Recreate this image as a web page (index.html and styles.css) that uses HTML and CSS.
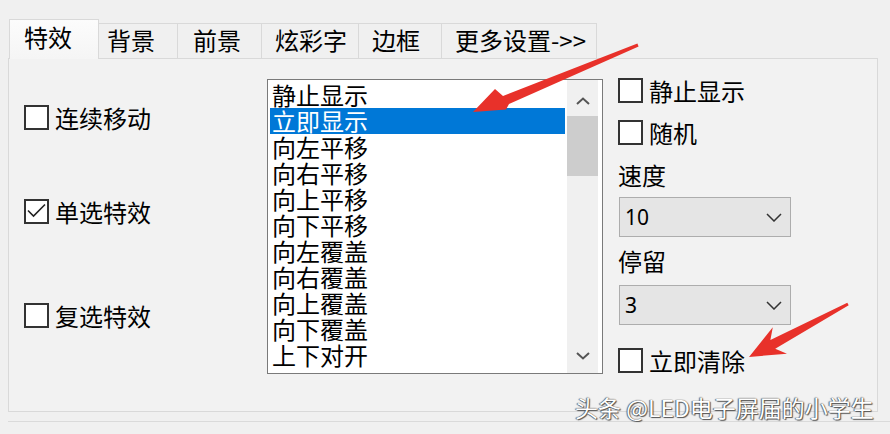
FILE: index.html
```html
<!DOCTYPE html>
<html lang="zh-CN">
<head>
<meta charset="utf-8">
<title>特效</title>
<link rel="stylesheet" href="styles.css">
</head>
<body>
<div class="window">
  <div class="tabs">
    <div class="tab active t1">特效</div>
    <div class="tab t2">背景</div>
    <div class="tab t3">前景</div>
    <div class="tab t4">炫彩字</div>
    <div class="tab t5">边框</div>
    <div class="tab t6">更多设置-&gt;&gt;</div>
  </div>
  <div class="panel">
    <div class="col-left">
      <div class="check"><span class="box"></span><span>连续移动</span></div>
      <div class="check c2"><span class="box"><svg width="21" height="21" viewBox="0 0 21 21"><polyline points="2,9.5 7.5,15 19,3.5" fill="none" stroke="#222" stroke-width="1.6"/></svg></span><span>单选特效</span></div>
      <div class="check c3"><span class="box"></span><span>复选特效</span></div>
    </div>
    <div class="listbox">
      <ul class="items">
        <li>静止显示</li>
        <li class="sel">立即显示</li>
        <li>向左平移</li>
        <li>向右平移</li>
        <li>向上平移</li>
        <li>向下平移</li>
        <li>向左覆盖</li>
        <li>向右覆盖</li>
        <li>向上覆盖</li>
        <li>向下覆盖</li>
        <li>上下对开</li>
      </ul>
      <div class="scrollbar">
        <div class="sb-btn up"><svg width="14" height="8" viewBox="0 0 14 8"><polyline points="1,7 7,1.5 13,7" fill="none" stroke="#555" stroke-width="2"/></svg></div>
        <div class="thumb"></div>
        <div class="sb-space"></div>
        <div class="sb-btn down"><svg width="14" height="8" viewBox="0 0 14 8"><polyline points="1,1 7,6.5 13,1" fill="none" stroke="#555" stroke-width="2"/></svg></div>
      </div>
    </div>
    <div class="col-right">
      <div class="check"><span class="box"></span><span>静止显示</span></div>
      <div class="check r2"><span class="box"></span><span>随机</span></div>
      <div class="lbl">速度</div>
      <div class="combo"><span>10</span><svg width="16" height="9" viewBox="0 0 16 9"><polyline points="1,1 8,8 15,1" fill="none" stroke="#333" stroke-width="1.5"/></svg></div>
      <div class="lbl lbl2">停留</div>
      <div class="combo combo2"><span>3</span><svg width="16" height="9" viewBox="0 0 16 9"><polyline points="1,1 8,8 15,1" fill="none" stroke="#333" stroke-width="1.5"/></svg></div>
      <div class="check r3"><span class="box"></span><span>立即清除</span></div>
    </div>
  </div>
  <div class="footer"></div>
</div>
<div class="watermark">头条 @LED电子屏届的小学生</div>
<svg class="arrows" width="890" height="434" viewBox="0 0 890 434">
  <polygon fill="#e8312a" points="637.4,43.6 503,96 495,89 473,112 506,109.5 509,104 638.6,46.4"/>
  <polygon fill="#e8312a" points="847.3,302.7 770.4,339.9 772.8,327.3 749,357 787,353.7 775.2,348.7 848.7,305.3"/>
</svg>
</body>
</html>
```

FILE: styles.css
```css
* { box-sizing: border-box; }
html, body { margin: 0; padding: 0; }
body {
  width: 890px;
  height: 434px;
  overflow: hidden;
  position: relative;
  background: #f0f0f0;
  color: #000;
  font-family: "Noto Sans CJK SC", "Noto Sans", sans-serif;
}

.window { padding: 19px 0 0 8px; }

.tabs {
  display: flex;
  align-items: flex-end;
  height: 39px;
  margin-left: 1px;
}
.tab {
  height: 35px;
  border-top: 1px solid #d9d9d9;
  border-right: 1px solid #d9d9d9;
  background: #f0f0f0;
  font-size: 24px;
  line-height: 32px;
  white-space: nowrap;
  padding-left: 13px;
}
.tab.active {
  height: 40px;
  margin-bottom: -1px;
  border-left: 1px solid #d9d9d9;
  background: linear-gradient(#fcfcfc, #f5f5f5);
  line-height: 33px;
  position: relative;
  z-index: 1;
}
.t1 { width: 90px; padding-left: 14px; }
.t2 { width: 79px; padding-left: 8px; }
.t3 { width: 84px; padding-left: 15px; }
.t4 { width: 97px; }
.t5 { width: 83px; }
.t6 { width: 155px; }

.panel {
  width: 870px;
  height: 354px;
  border: 1px solid #d9d9d9;
  background: #f2f2f2;
  display: flex;
  align-items: flex-start;
}

.col-left {
  width: 258px;
  flex: none;
  padding: 46px 0 0 15px;
  display: flex;
  flex-direction: column;
}

.check {
  display: flex;
  align-items: center;
  gap: 6px;
  height: 25px;
  font-size: 24px;
  line-height: 25px;
  white-space: nowrap;
}
.box {
  width: 25px;
  height: 25px;
  flex: none;
  border: 2px solid #333;
  background: #fff;
  display: flex;
}
.c2 { margin-top: 69px; }
.c3 { margin-top: 79px; }

.listbox {
  margin-top: 20px;
  width: 336px;
  height: 295px;
  flex: none;
  border: 1px solid #7a7a7a;
  background: #fff;
  display: flex;
}
.items {
  list-style: none;
  margin: 0;
  padding: 2px;
  width: 299px;
  height: 100%;
  overflow: hidden;
}
.items li {
  height: 26px;
  line-height: 26px;
  font-size: 24px;
  padding-left: 2px;
  white-space: nowrap;
}
.items li.sel { background: #0078d7; color: #fff; }

.scrollbar {
  width: 31px;
  margin-right: 4px;
  background: #f0f0f0;
  display: flex;
  flex-direction: column;
}
.sb-btn {
  height: 36px;
  flex: none;
  display: flex;
  align-items: center;
  justify-content: center;
}
.sb-btn.up { padding-top: 6px; }
.sb-btn.down { padding-top: 2px; }
.thumb { height: 60px; background: #cdcdcd; flex: none; }
.sb-space { flex: 1; }

.col-right {
  margin: 19px 0 0 15px;
  display: flex;
  flex-direction: column;
  align-items: flex-start;
}
.r2 { margin-top: 17px; }
.r3 { margin-top: 23px; }
.lbl {
  font-size: 24px;
  line-height: 26px;
  margin-top: 17px;
}
.lbl2 { margin-top: 11px; }
.combo {
  width: 172px;
  height: 40px;
  margin: 9px 0 0 1px;
  border: 1px solid #adadad;
  background: #e5e5e5;
  display: flex;
  align-items: center;
  justify-content: space-between;
  padding: 0 8px 0 5px;
  font-family: "Noto Sans", "Open Sans", sans-serif;
  font-size: 21px;
  line-height: 26px;
}
.combo2 { margin-top: 11px; }

.footer {
  margin-top: 9px;
  border-top: 1px solid #dadada;
}

.watermark {
  position: absolute;
  left: 575px;
  top: 396px;
  font-size: 23px;
  line-height: 23px;
  color: #fff;
  white-space: nowrap;
  text-shadow: 0 0 1px #333, 1px 1px 1px #555, -1px 0 1px #777;
}

.arrows {
  position: absolute;
  left: 0;
  top: 0;
  pointer-events: none;
}
```
